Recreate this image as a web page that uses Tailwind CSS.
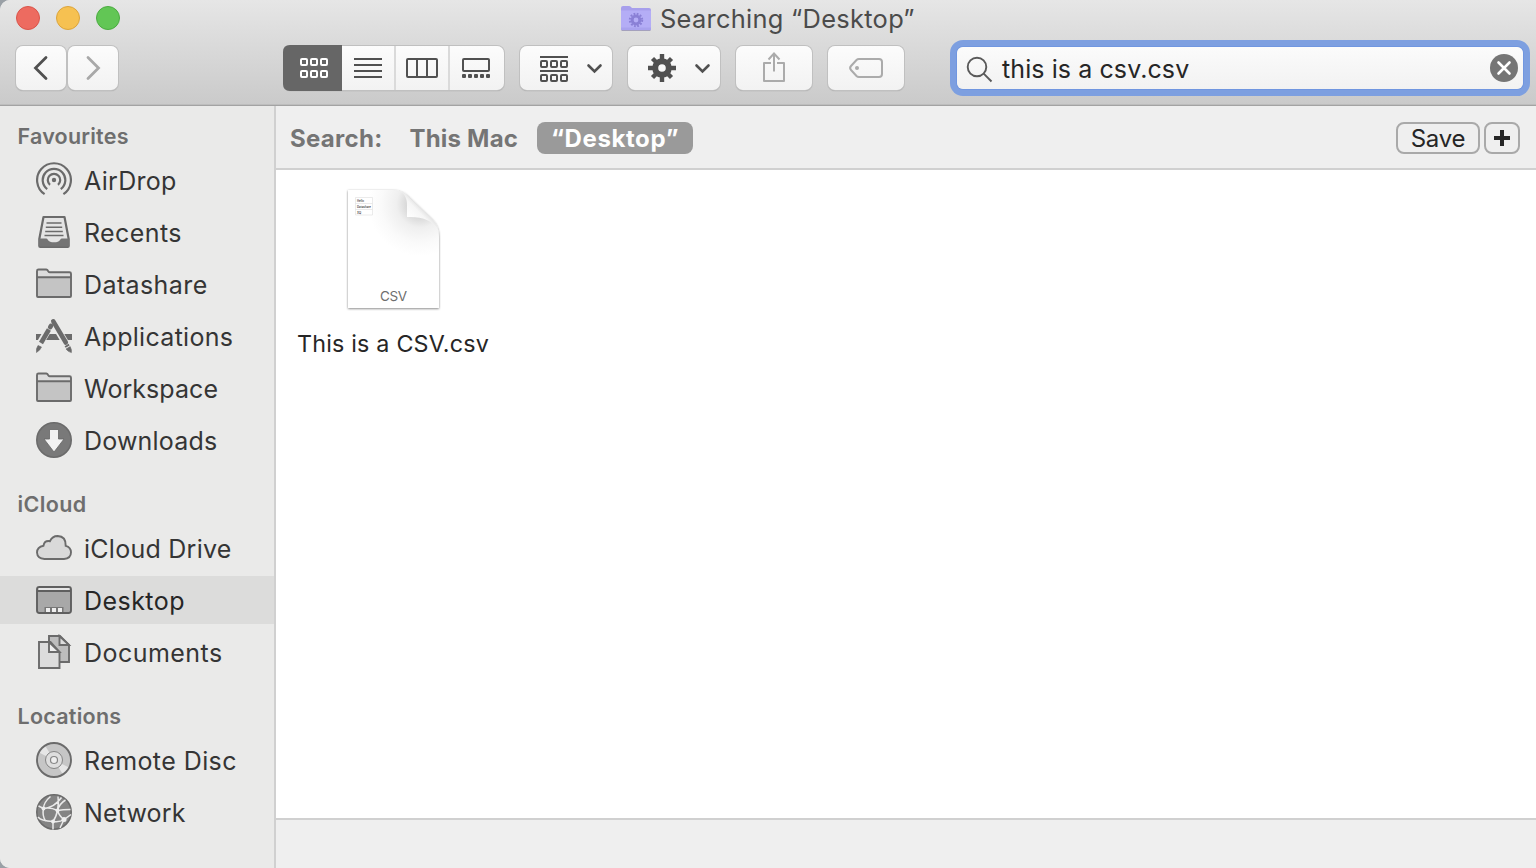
<!DOCTYPE html>
<html lang="en">
<head>
<meta charset="utf-8">
<title>Searching “Desktop”</title>
<script src="https://cdn.jsdelivr.net/npm/@tailwindcss/browser@4"></script>
</head>
<body class="w-[1536px] h-[868px] overflow-hidden bg-[#9aa0a6] font-['Inter','Liberation_Sans',sans-serif]">
<div class="w-full h-full flex flex-col overflow-hidden rounded-tl-[10px] rounded-bl-[10px] bg-[#eaeae9]">
  <header class="h-[106px] shrink-0 flex flex-col border-b border-[#a3a3a3] bg-linear-to-b from-[#e6e6e6] to-[#cacaca] shadow-[inset_0_-1px_0_#bdbdbd]">
    <div class="h-[45px] shrink-0 grid grid-cols-[620px_1fr]">
      <div class="flex items-start gap-4 pt-[6px] pl-4">
        <span class="size-6 rounded-full bg-[#ed6b60] border border-[#d9544a]"></span>
        <span class="size-6 rounded-full bg-[#f6c151] border border-[#dba43c]"></span>
        <span class="size-6 rounded-full bg-[#62c655] border border-[#4bab40]"></span>
      </div>
      <div class="flex items-start gap-2">
        <svg class="mt-[5px] w-8 h-[27px]" viewBox="620 5 32 27">
          <path d="M621.500 30.500h29" stroke="#8d88b0" stroke-width="1" opacity=".7"/>
          <path d="M621 8q0-2 2-2h6q1.200 0 2 1l1 1h17q2 0 2 2v20h-30z" fill="#a79fec"/>
          <path d="M621 10.500h30v19.500h-30z" fill="#b4adf6"/>
          <path d="M621 27.500h30v2.500h-30z" fill="#a9a2ee"/>
          <circle cx="636" cy="20" r="3.900" fill="none" stroke="#8a80d6" stroke-width="3"/>
          <circle cx="636" cy="20" r="6.200" fill="none" stroke="#8a80d6" stroke-width="2" stroke-dasharray="1.800 1.446"/>
        </svg>
        <h1 class="h-[38px] leading-[38px] text-[25.400px] tracking-[0.300px] text-[#4b4b4b] whitespace-nowrap">Searching “Desktop”</h1>
      </div>
    </div>
    <div class="flex items-start pl-4">
      <div class="flex gap-[2px] pt-px">
        <button class="w-[50px] h-11 rounded-[7px] bg-linear-to-b from-[#fcfcfc] to-[#f2f2f2] shadow-[0_0_0_1px_#c0c0c0,0_1px_1px_#8f8f8f]"><svg class="w-[50px] h-11" viewBox="16 46 50 44"><path d="M46 57.500 35.500 68 46 78.500" fill="none" stroke="#505050" stroke-width="2.800" stroke-linecap="round"/></svg></button>
        <button class="w-[50px] h-11 rounded-[7px] bg-linear-to-b from-[#fcfcfc] to-[#f2f2f2] shadow-[0_0_0_1px_#c0c0c0,0_1px_1px_#8f8f8f]"><svg class="w-[50px] h-11" viewBox="68 46 50 44"><path d="M88 57.500 98.500 68 88 78.500" fill="none" stroke="#a8a8a8" stroke-width="2.800" stroke-linecap="round"/></svg></button>
      </div>
      <div class="ml-[166px] mt-px w-[220px] h-11 flex rounded-[7px] bg-linear-to-b from-[#fcfcfc] to-[#f2f2f2] shadow-[0_0_0_1px_#c0c0c0,0_1px_1px_#8f8f8f]">
        <svg class="w-[220px] h-11 overflow-visible" viewBox="284 46 220 44">
          <path d="M342 45v46h-52q-7 0-7-7V52q0-7 7-7z" fill="#666"/>
          <g fill="none" stroke="#fff" stroke-width="2"><rect x="301" y="59" width="6" height="6" rx="1"/><rect x="311" y="59" width="6" height="6" rx="1"/><rect x="321" y="59" width="6" height="6" rx="1"/><rect x="301" y="71" width="6" height="6" rx="1"/><rect x="311" y="71" width="6" height="6" rx="1"/><rect x="321" y="71" width="6" height="6" rx="1"/></g>
          <path d="M395 46v44M449 46v44" stroke="#dadada" stroke-width="2"/>
          <path d="M354 59h28M354 65h28M354 71h28M354 77h28" stroke="#505050" stroke-width="2"/>
          <rect x="407" y="59" width="30" height="18" rx="1" fill="none" stroke="#505050" stroke-width="2"/><path d="M417 59v18M427 59v18" stroke="#505050" stroke-width="2"/>
          <rect x="463" y="59" width="26" height="12" rx="1" fill="none" stroke="#505050" stroke-width="2"/>
          <g fill="#505050"><rect x="462" y="74" width="4" height="4" rx="1"/><rect x="468" y="74" width="4" height="4" rx="1"/><rect x="474" y="74" width="4" height="4" rx="1"/><rect x="480" y="74" width="4" height="4" rx="1"/><rect x="486" y="74" width="4" height="4" rx="1"/></g>
        </svg>
      </div>
      <button class="ml-4 mt-px w-[92px] h-11 rounded-[7px] bg-linear-to-b from-[#fcfcfc] to-[#f2f2f2] shadow-[0_0_0_1px_#c0c0c0,0_1px_1px_#8f8f8f]">
        <svg class="w-[92px] h-11" viewBox="520 46 92 44" fill="none" stroke="#505050" stroke-width="2"><path d="M540 57h28M540 71h28"/><rect x="541" y="61" width="6" height="6" rx="1"/><rect x="551" y="61" width="6" height="6" rx="1"/><rect x="561" y="61" width="6" height="6" rx="1"/><rect x="541" y="75" width="6" height="6" rx="1"/><rect x="551" y="75" width="6" height="6" rx="1"/><rect x="561" y="75" width="6" height="6" rx="1"/><path d="M588.500 65.500 594.500 71.500 600.500 65.500" stroke-width="2.600" stroke-linecap="round"/></svg>
      </button>
      <button class="ml-4 mt-px w-[92px] h-11 rounded-[7px] bg-linear-to-b from-[#fcfcfc] to-[#f2f2f2] shadow-[0_0_0_1px_#c0c0c0,0_1px_1px_#8f8f8f]">
        <svg class="w-[92px] h-11" viewBox="628 46 92 44" fill="none" stroke="#505050"><circle cx="662" cy="68" r="6.800" stroke-width="6"/><path stroke-width="4.400" d="M662 54v6M662 76v6M648 68h6M670 68h6M652.500 58.500l4 4M667.500 73.500l4 4M671.500 58.500l-4 4M656.500 73.500l-4 4"/><path d="M696.500 65.500 702.500 71.500 708.500 65.500" stroke-width="2.600" stroke-linecap="round"/></svg>
      </button>
      <button class="ml-4 mt-px w-[76px] h-11 rounded-[7px] bg-linear-to-b from-[#fcfcfc] to-[#f2f2f2] shadow-[0_0_0_1px_#c0c0c0,0_1px_1px_#8f8f8f]">
        <svg class="w-[76px] h-11" viewBox="736 46 76 44" fill="none" stroke="#ababab" stroke-width="2"><path d="M771 63h-7v18h20V63h-7" stroke-linejoin="round"/><path d="M774 71.500V54M768.500 59.500 774 53.500 779.500 59.500"/></svg>
      </button>
      <button class="ml-4 mt-px w-[76px] h-11 rounded-[7px] bg-linear-to-b from-[#fcfcfc] to-[#f2f2f2] shadow-[0_0_0_1px_#c0c0c0,0_1px_1px_#8f8f8f]">
        <svg class="w-[76px] h-11" viewBox="828 46 76 44" fill="none" stroke="#ababab" stroke-width="2"><path d="M859 59h20q3 0 3 3v12q0 3-3 3h-20q-1.500 0-2.500-1l-5.500-6q-1.800-2 0-4l5.500-6q1-1 2.500-1z"/><circle cx="857" cy="68" r="2" fill="#ababab" stroke="none"/></svg>
      </button>
      <div class="ml-[53px] mt-[2px] w-[566px] h-[42px] flex items-center rounded-[6px] bg-linear-to-b from-[#fbfbfb] to-[#f2f2f2] shadow-[0_0_0_1px_#7096e0,0_0_0_7px_#7d9fe0]">
        <svg class="w-[45px] h-[42px] shrink-0" viewBox="957 47 45 42" fill="none" stroke="#5a5a5a" stroke-width="1.900"><circle cx="977" cy="67" r="9.300"/><path d="M983.700 73.700 991.500 81.500"/></svg>
        <span class="leading-[42px] text-[25px] tracking-[0.090px] text-[#262626] whitespace-nowrap pt-[2px]">this is a csv.csv</span>
        <svg class="ml-auto mr-[5px] size-7 shrink-0" viewBox="0 0 28 28"><circle cx="14" cy="14" r="14" fill="#757575"/><path d="M8.500 8.500l11 11M19.500 8.500l-11 11" stroke="#fff" stroke-width="2.600" stroke-linecap="round"/></svg>
      </div>
    </div>
  </header>

  <div class="flex-1 min-h-0 flex">
    <aside class="w-[276px] shrink-0 border-r-2 border-[#d0d0d0] bg-[#eaeae9] pt-[10px] text-[25px] text-[#353535]">
      <section>
        <h2 class="h-10 leading-10 pl-[17.500px] text-[21.500px] tracking-[0.220px] font-semibold text-[#6e6e6e]">Favourites</h2>
        <ul class="flex flex-col gap-1">
          <li class="h-12 flex items-center gap-3 pl-9">
            <svg class="size-9" viewBox="36 162 36 36" fill="none" stroke="#6b6b6b" stroke-width="2.200"><circle cx="54" cy="180" r="2.200" fill="#6b6b6b" stroke="none"/><path d="M50 184.800a6.200 6.200 0 1 1 8 0M47.200 189.100a11.300 11.300 0 1 1 13.600 0M44.600 194.200a16.900 16.900 0 1 1 18.800 0"/></svg>
            <span class="pt-[3px] tracking-[0.300px]">AirDrop</span></li>
          <li class="h-12 flex items-center gap-3 pl-9">
            <svg class="size-9" viewBox="36 214 36 36"><path d="M43.500 217h21l4.200 22v7q0 1-1 1H40.300q-1 0-1-1v-7z" fill="#e4e4e4" stroke="#6b6b6b" stroke-width="2.200" stroke-linejoin="round"/><path d="M39 238.500h7q1.200 0 1.800 1.200 1.700 2.600 6.200 2.600t6.200-2.600q.6-1.200 1.800-1.200h7v8H39z" fill="#747474"/><path d="M46.500 223h15M45.800 227.200h16.400M45.200 231.400h17.600M44.500 235.400h19" stroke="#6b6b6b" stroke-width="1.500"/></svg>
            <span class="pt-[3px] tracking-[0.400px]">Recents</span></li>
          <li class="h-12 flex items-center gap-3 pl-9">
            <svg class="size-9" viewBox="36 266 36 36"><path d="M37 296V271q0-1.500 1.500-1.500h7.800q1 0 1.500 1l.6 1q.5.800 1.500.8H69.500q1.500 0 1.500 1.500V296q0 1-1 1H38q-1 0-1-1z" fill="#dcdcdc" stroke="#6b6b6b" stroke-width="1.900"/><path d="M38 278h32v18H38z" fill="#c4c4c4"/><path d="M37 277.300h34" stroke="#6b6b6b" stroke-width="1.900"/></svg>
            <span class="pt-[3px] tracking-[0.400px]">Datashare</span></li>
          <li class="h-12 flex items-center gap-3 pl-9">
            <svg class="size-9" viewBox="36 318 36 36" fill="none" stroke="#6b6b6b"><path d="M36 337h36" stroke-width="6"/><path d="M52 323 38.500 346" stroke="#eaeae9" stroke-width="7.200"/><path d="M52.500 321 68.500 348" stroke="#eaeae9" stroke-width="7.200"/><path d="M48.900 329.500 41 343" stroke-width="4.600"/><path d="M51 325.800 50.200 327.200" stroke-width="4.600" stroke-linecap="round"/><path d="M53.300 321.300 65.800 342.500" stroke-width="4.600" stroke-linecap="round"/><path d="M66.600 345 67.600 346.700" stroke-width="4.600"/><path d="M38 345.500q-2 2.500-1.500 7 4-2.500 5-5.500z" fill="#6b6b6b" stroke-width=".6"/><path d="M66 349l4.200-2.400q1.600 3 1.200 6-3.400-.6-5.400-3.600z" fill="#6b6b6b" stroke-width=".6"/></svg>
            <span class="pt-[3px] tracking-[0.300px]">Applications</span></li>
          <li class="h-12 flex items-center gap-3 pl-9">
            <svg class="size-9" viewBox="36 266 36 36"><path d="M37 296V271q0-1.500 1.500-1.500h7.800q1 0 1.500 1l.6 1q.5.800 1.500.8H69.500q1.500 0 1.500 1.500V296q0 1-1 1H38q-1 0-1-1z" fill="#dcdcdc" stroke="#6b6b6b" stroke-width="1.900"/><path d="M38 278h32v18H38z" fill="#c4c4c4"/><path d="M37 277.300h34" stroke="#6b6b6b" stroke-width="1.900"/></svg>
            <span class="pt-[3px] tracking-[0.060px]">Workspace</span></li>
          <li class="h-12 flex items-center gap-3 pl-9">
            <svg class="size-9" viewBox="36 422 36 36"><circle cx="54" cy="440" r="17.200" fill="#797979" stroke="#6b6b6b" stroke-width="1.600"/><path d="M49.500 429.500h9V439H64L54 452 44 439h5.500z" fill="#f2f2f2" stroke="#666" stroke-width=".8"/></svg>
            <span class="pt-[3px] tracking-[0.180px]">Downloads</span></li>
        </ul>
      </section>
      <section class="mt-5">
        <h2 class="h-10 leading-10 pl-[17.500px] text-[21.500px] tracking-[0.400px] font-semibold text-[#6e6e6e]">iCloud</h2>
        <ul class="flex flex-col gap-1">
          <li class="h-12 flex items-center gap-3 pl-9">
            <svg class="size-9" viewBox="36 530 36 36"><path d="M44.500 559H64q7-.5 7-6.700 0-5-5.300-6.500.3-9.500-8-9.800-5.500 0-7.700 5.200-5.500-1-6.500 4.500Q37 547 37 552.500q.3 6 7.500 6.500z" fill="#d9d9d9" stroke="#6b6b6b" stroke-width="1.900"/></svg>
            <span class="pt-[3px] tracking-[0.260px]">iCloud Drive</span></li>
          <li class="h-12 flex items-center gap-3 pl-9 bg-[#dcdcdb] text-[#262626]">
            <svg class="size-9" viewBox="36 582 36 36"><rect x="37" y="587" width="34" height="26" rx="2.500" fill="#a8a8a8" stroke="#5f5f5f" stroke-width="1.900"/><path d="M38.500 588h31v2h-31z" fill="#e6e6e6"/><path d="M37 591h34" stroke="#5f5f5f" stroke-width="1.800"/><path d="M44.500 612v-5h19v5" fill="#777"/><path d="M46 608h4v4h-4zM52 608h4v4h-4zM58 608h4v4h-4z" fill="#eee"/></svg>
            <span class="pt-[3px] tracking-[0.450px]">Desktop</span></li>
          <li class="h-12 flex items-center gap-3 pl-9">
            <svg class="size-9" viewBox="36 634 36 36" stroke="#6b6b6b" stroke-width="1.900"><path d="M49 636h11l9 9v17H49z" fill="#bdbdbd"/><path d="M59.500 636v9H69z" fill="#ddd"/><path d="M39 642h11.500l9 10v16H39z" fill="#dcdcdc"/><path d="M49 642v10h10.500z" fill="#eee"/></svg>
            <span class="pt-[3px] tracking-[0.450px]">Documents</span></li>
        </ul>
      </section>
      <section class="mt-5">
        <h2 class="h-10 leading-10 pl-[17.500px] text-[21.500px] tracking-[0.250px] font-semibold text-[#6e6e6e]">Locations</h2>
        <ul class="flex flex-col gap-1">
          <li class="h-12 flex items-center gap-3 pl-9">
            <svg class="size-9" viewBox="36 742 36 36"><circle cx="54" cy="760" r="17" fill="#c6c6c6"/><path d="M54 760 39 752.500A17 17 0 0 1 45 745.500zM54 760 69 767.500A17 17 0 0 1 63 774.500z" fill="#e6e6e6"/><circle cx="54" cy="760" r="17" fill="none" stroke="#6b6b6b" stroke-width="1.900"/><circle cx="54" cy="760" r="8.500" fill="#dedede" stroke="#858585" stroke-width="1"/><circle cx="54" cy="760" r="3.500" fill="#eee" stroke="#858585" stroke-width="1.200"/></svg>
            <span class="pt-[3px] tracking-[0.420px]">Remote Disc</span></li>
          <li class="h-12 flex items-center gap-3 pl-9">
            <svg class="size-9" viewBox="36 794 36 36"><circle cx="54" cy="812" r="17.200" fill="#848484" stroke="#6b6b6b" stroke-width="1.600"/><g fill="none" stroke="#eaeaea" stroke-width="1.500"><path d="M38.500 806l5 2.500q11-1 18-11M43.500 808.500q0-6 7-12M43.500 808.500q-1.500 7 2 12.500M38 817q3 4 15 4.500M57.500 810.500q1.500-7 .5-14M57.500 810.500q5-1 13-1M57.500 810.500q2 6 6.500 9l7-5M53 821.500q3-4 4.500-11M43.500 808.500q7-1.500 14 2 2-7 8-10.500M53 821.500q7 1 11-2M53 829.500v-8M64 819.500l-4 8.500"/></g><g fill="#eee"><circle cx="43.500" cy="808.500" r="2"/><circle cx="57.500" cy="810.500" r="2"/><circle cx="53" cy="821.500" r="2"/><circle cx="64" cy="819.500" r="2.500"/></g></svg>
            <span class="pt-[3px] tracking-[0.160px]">Network</span></li>
        </ul>
      </section>
    </aside>

    <main class="flex-1 min-w-0 flex flex-col bg-white">
      <div class="h-16 shrink-0 flex items-center border-b-2 border-[#d0d0d0] bg-[#efefef] pt-[2px] pl-[14px] pr-4 text-[24px] font-bold text-[#757575]">
        <span class="w-[119.500px] pt-[2px] tracking-[0.300px] whitespace-nowrap">Search:</span>
        <span class="w-[127.500px] pt-[2px] tracking-[0.200px] whitespace-nowrap">This Mac</span>
        <span class="w-[156px] h-8 pt-px rounded-[8px] bg-[#9a9a9a] text-white text-center leading-8 tracking-[0.600px] whitespace-nowrap">“Desktop”</span>
        <button class="ml-auto w-[84px] h-8 pt-px rounded-[8px] border-2 border-[#a9a9a9] text-[24px] leading-7 font-normal tracking-[-0.200px] text-[#262626]">Save</button>
        <button class="ml-1 w-9 h-8 rounded-[8px] border-2 border-[#a9a9a9] flex items-center justify-center"><svg class="size-4" viewBox="0 0 16 16"><path d="M8 0v16M0 8h16" stroke="#262626" stroke-width="4"/></svg></button>
      </div>
      <div class="flex-1 pt-[15px] pl-[17px]">
        <figure class="w-[200px] flex flex-col items-center">
          <svg class="w-[104px] h-[130px]" viewBox="341 185 104 130">
            <defs>
              <linearGradient id="curl" x1="407" y1="217" x2="421" y2="203" gradientUnits="userSpaceOnUse"><stop offset="0" stop-color="#fff"/><stop offset=".6" stop-color="#f6f6f6"/><stop offset="1" stop-color="#d8d8d8"/></linearGradient>
              <radialGradient id="shade" cx="420" cy="204" r="52" gradientUnits="userSpaceOnUse"><stop offset=".2" stop-color="#d2d2d2"/><stop offset=".45" stop-color="#efefef"/><stop offset=".75" stop-color="#fafafa"/><stop offset="1" stop-color="#fff"/></radialGradient>
              <filter id="drop" x="-10%" y="-10%" width="120%" height="120%"><feDropShadow dx="0" dy=".8" stdDeviation="1" flood-color="#000" flood-opacity=".5"/></filter>
            </defs>
            <path d="M348 190h44q9 0 15 5l25 24q7 7 7 18v71h-91z" fill="url(#shade)" filter="url(#drop)"/>
            <path d="M394 190q13 1 13 15v12q23-1 31.500 13-1.500-6-6.500-11l-25-24q-6-5-13-5z" fill="url(#curl)"/>
            <g fill="#fff" stroke="#e2e2e2" stroke-width=".7"><path d="M355.500 197.500h17v17.500h-17zM355.500 203.500h17M355.500 209.500h17"/></g>
            <g fill="#444" font-size="2.800" font-weight="600"><text x="357" y="201.700">Hello</text><text x="357" y="207.700" textLength="14">Datashare</text><text x="357" y="213.700">XQ</text></g>
            <text x="393.500" y="301" text-anchor="middle" font-size="13.500" fill="#6e6e6e" textLength="27">CSV</text>
          </svg>
          <figcaption class="mt-[13px] leading-8 text-[23.300px] tracking-[0.200px] text-[#262626] whitespace-nowrap">This is a CSV.csv</figcaption>
        </figure>
      </div>
      <footer class="h-[50px] shrink-0 border-t-2 border-[#d0d0d0] bg-[#efefef]"></footer>
    </main>
  </div>
</div>
</body>
</html>
